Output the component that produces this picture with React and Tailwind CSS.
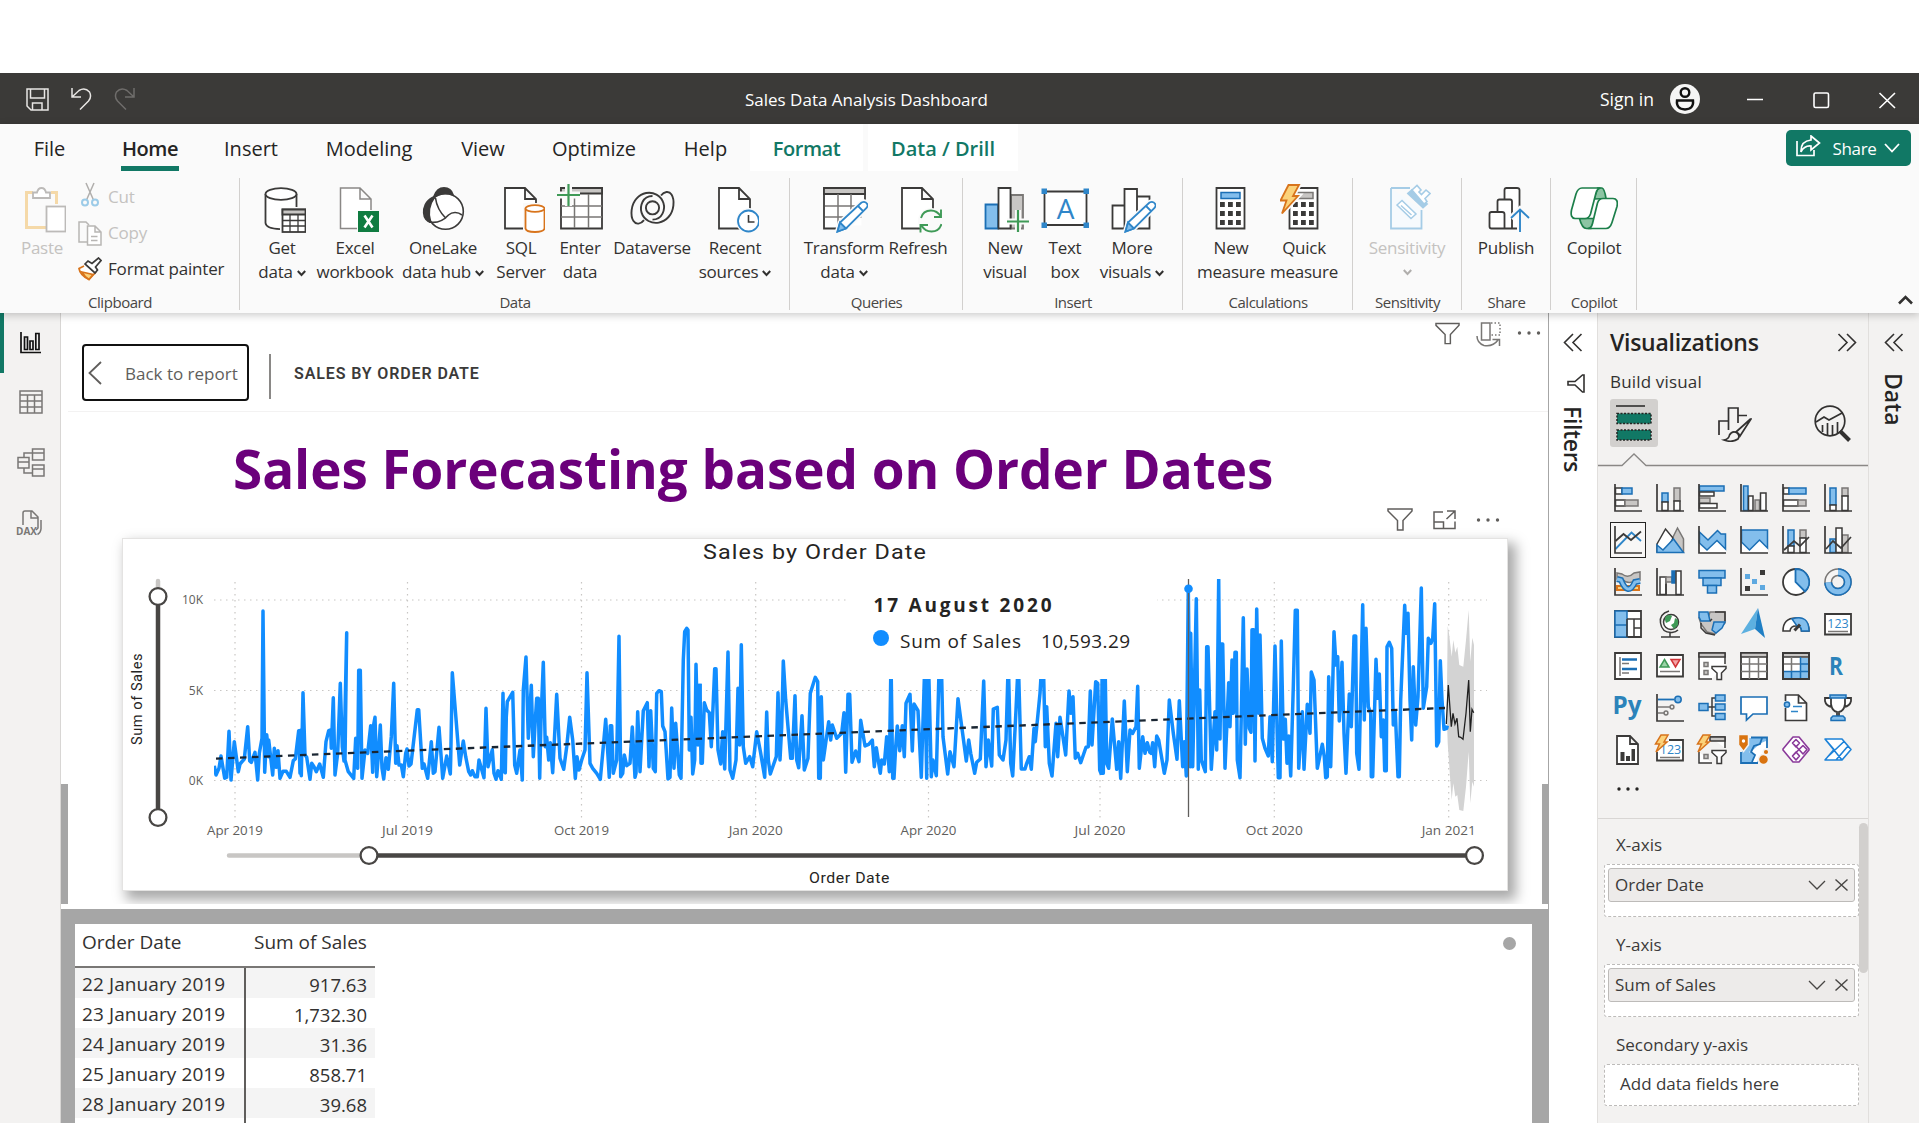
import React from "react";

const INK = "#3b3a39";
const BLUE = "#1b6fb5";
const SKY = "#83beec";
const GRAY = "#797775";
const SILVER = "#c8c6c4";

/* ---------- small shared glyphs ---------- */

const Caret = ({ className = "" }) => (
  <svg width="9" height="7" viewBox="0 0 9 7" fill="none" stroke="currentColor" strokeWidth="2" className={className}>
    <path d="M0.8 1 4.5 5 8.2 1" />
  </svg>
);

const Funnel = ({ w = 26, h = 23 }) => (
  <svg width={w} height={h} viewBox="0 0 26 23" fill="none" stroke="#605e5c" strokeWidth="1.5">
    <path d="M1 1H25V3L16 12.5V22H10.500V12.500L1 3Z" />
  </svg>
);

const Dots = ({ color = "#605e5c", gap = 9.500 }) => (
  <svg width="24" height="6" viewBox="0 0 24 6" fill={color}>
    <circle cx={12 - gap} cy="3" r="1.700" />
    <circle cx="12" cy="3" r="1.700" />
    <circle cx={12 + gap} cy="3" r="1.700" />
  </svg>
);

const DoubleChevron = ({ flip = false }) => (
  <svg width="20" height="19" viewBox="0 0 20 19" fill="none" stroke="#323130" strokeWidth="1.6" className={flip ? "-scale-x-100" : ""}>
    <path d="M10 1 1.500 9.500 10 18M18.500 1 10 9.500 18.500 18" />
  </svg>
);

/* ---------- ribbon icons ---------- */

const R = ({ children }) => (
  <svg width="48" height="49" viewBox="0 0 48 49" fill="none" stroke={INK} strokeWidth="1.8" className="shrink-0">
    {children}
  </svg>
);
const Doc = ({ x = 8, stroke = INK }) => (
  <path stroke={stroke} fill="#fff" d={`M${x} 4H${x + 20}L${x + 31} 15V44.500H${x}ZM${x + 20} 4V15H${x + 31}`} />
);
const Pencil = () => (
  <g stroke="#2f86c9" fill="#fff">
    <path stroke="#fafafa" strokeWidth="5" d="M17.500 47.500 20 38.500 41.500 18.500Q45.500 16.500 47.500 20.500Q48 22 46.500 24L26 44.500Z" />
    <path d="M17.500 47.500 20 38.500 41.500 18.500Q45.500 16.500 47.500 20.500Q48 22 46.500 24L26 44.500ZM38 22 43.500 27.500" />
    <path fill={SKY} d="M17.500 47.500 20 38.500 26 44.500Z" />
  </g>
);
const Keys = () => (
  <g fill={INK} stroke="none">
    {[18, 27, 36].map((y) => [13, 21, 29].map((x) => <rect key={`${x}-${y}`} x={x} y={y} width="4.800" height="5" />))}
  </g>
);

const SWIRL = "M33 11.500C36 7.500 41 6.500 43.500 10.500C47 16 46 27 40.500 33C35 39 27 40.500 20.500 37C13.500 33 11 25 14.500 18C16.500 14 19.500 12 24.500 12";

const icons = {
  paste: (
    <R>
      <path stroke="#f5d9a8" strokeWidth="3" d="M15 8.500H8.500V43.500H28M33 8.500H38.500V20" />
      <path stroke="#bcbab8" fill="#fff" d="M15 14V8.500H19Q20 4 23.500 4T28 8.500H32V14Z" />
      <rect x="28.500" y="22.500" width="19" height="25" stroke="#bcbab8" fill="#fff" />
    </R>
  ),
  getData: (
    <R>
      <path fill="#fff" d="M7.500 9.500V39Q7.500 45 23 45.500V24H38.500V9.500" stroke="none" />
      <path d="M7.500 10V39Q8 44.500 22 45.200M38.500 10V23" />
      <ellipse cx="23" cy="10" rx="15.500" ry="5.800" fill="#fff" />
      <rect x="24.500" y="25.500" width="23" height="22.500" fill="#fff" />
      <path fill={SILVER} d="M24.500 25.500H47.500V30.500H24.500Z" />
      <path strokeWidth="1.300" d="M24.500 36.500H47.500M24.500 42H47.500M32 30.500V48M40 30.500V48" />
    </R>
  ),
  excel: (
    <R>
      <path stroke="#8a8886" fill="#fff" strokeWidth="1.500" d="M26 44.500H9.500V4H29L40 15V26M29 4V15H40" />
      <rect x="27" y="27" width="21" height="21" fill="#107c41" stroke="none" />
      <path stroke="#fff" strokeWidth="2.600" d="M33.500 31.500 41.500 43.500M41.500 31.500 33.500 43.500" />
    </R>
  ),
  oneLake: (
    <R>
      <circle cx="26.500" cy="27.500" r="17.800" fill="#fff" strokeWidth="1.600" />
      <path fill={INK} d="M15 12.500C17 7 20.500 4 25 4C30 4 33 7.500 34 11C28 8.500 20 9 15 12.500Z" />
      <path fill={INK} d="M13.500 13.500C6.500 17 4.500 24 4.800 29C5 34 8 37.500 11.500 38C9 30 9.500 21 16 12.500Z" />
      <path strokeWidth="1.600" d="M16.500 14C17.500 22 21.500 29 27 34.500M10 38C18 39.500 25 36 29.500 31C33.500 27.500 39 28 43 31" />
    </R>
  ),
  sql: (
    <R>
      <Doc x={8} />
      <rect x="26" y="19" width="24" height="30" fill="#fafafa" stroke="none" />
      <path stroke="#d8741c" fill="#fff" d="M28.500 24.500V44.500Q29 48 38 48T47.500 44.500V24.500" />
      <ellipse cx="38" cy="24.500" rx="9.500" ry="3.400" stroke="#d8741c" fill="#fff" />
    </R>
  ),
  enterData: (
    <R>
      <path fill="#fff" d="M5 4H46V44.500H5Z" />
      <path fill={SILVER} d="M5 4H46V9.500H5Z" />
      <path stroke={GRAY} strokeWidth="1.500" d="M5 22H46M5 33H46M18.500 10V44M32.500 10V44" />
      <path stroke="#fafafa" strokeWidth="7" d="M12.500 0V22M0 11H24" />
      <path stroke="#3f9a57" strokeWidth="2.200" d="M12.500 0V22M1 11H24" />
    </R>
  ),
  dataverse: (
    <R>
      <g strokeWidth="1.900">
        <path d={SWIRL} />
        <path transform="rotate(180 24.500 23.800)" d={SWIRL} />
        <circle cx="24.500" cy="23.800" r="6.600" />
      </g>
    </R>
  ),
  recent: (
    <R>
      <Doc x={8} />
      <circle cx="38" cy="37" r="13" fill="#fafafa" stroke="none" />
      <circle cx="37.500" cy="37" r="10.500" stroke="#2f86c9" fill="#fff" />
      <path strokeWidth="1.600" d="M37.500 31V38H43.500" />
    </R>
  ),
  transform: (
    <R>
      <path fill="#fff" d="M4 4H45V44.500H4Z" />
      <path fill={SILVER} d="M4 4H45V10H4Z" />
      <path stroke={GRAY} strokeWidth="1.500" d="M5 22H44M5 33H44M18 10V44M31 10V44" />
      <path stroke="#fafafa" strokeWidth="9" d="M46 26V46H26" />
      <Pencil />
    </R>
  ),
  refresh: (
    <R>
      <Doc x={8} />
      <circle cx="37" cy="37" r="13" fill="#fafafa" stroke="none" />
      <path stroke="#3f9a57" strokeWidth="1.900" d="M27 34Q29 26.500 37 26.500Q43 26.500 47 32.500M47 25.500V33H40M47.500 40Q45 47.500 37.500 47.500Q31 47.500 27.500 41.500M26.500 48.500V41H34" />
    </R>
  ),
  newVisual: (
    <R>
      <path fill={SKY} stroke={BLUE} d="M4.500 20.500H17V44.500H4.500Z" />
      <path fill={SILVER} stroke={GRAY} d="M30 11H42V44.500H30Z" />
      <path fill="#fff" d="M17.500 4H29.500V44.500H17.500Z" />
      <path stroke="#fafafa" strokeWidth="6" d="M37 26V49M26 37.500H48" />
      <path stroke="#3f9a57" strokeWidth="2.200" d="M37 26V48M26 37.500H48" />
    </R>
  ),
  textBox: (
    <R>
      <path fill="#fff" d="M3.500 7.500H45.500V41H3.500Z" />
      <g fill="#2f86c9" stroke="none">
        <rect x="0.500" y="4.500" width="5.500" height="5.500" />
        <rect x="42.500" y="4.500" width="5.500" height="5.500" />
        <rect x="0.500" y="38.500" width="5.500" height="5.500" />
        <rect x="42.500" y="38.500" width="5.500" height="5.500" />
      </g>
      <text x="24.500" y="34.500" textAnchor="middle" fontSize="28" fill="#2f86c9" stroke="none">A</text>
    </R>
  ),
  moreVisuals: (
    <R>
      <path fill="#fff" d="M4.500 21.500H16.500V44.500H4.500ZM29 12.500H41.500V44.500H29ZM16.500 5H29V44.500H16.500Z" />
      <Pencil />
    </R>
  ),
  measure: (
    <R>
      <path fill="#fff" d="M9.500 4H37.500V44.500H9.500Z" />
      <path fill={SKY} stroke={BLUE} strokeWidth="1.500" d="M14 8.500H33V14.500H14Z" />
      <Keys />
    </R>
  ),
  quick: (
    <R>
      <path fill="#fff" d="M9.500 4H37.500V44.500H9.500Z" />
      <path fill={SILVER} stroke={GRAY} strokeWidth="1.500" d="M16 8.500H33V14.500H16Z" />
      <Keys />
      <path stroke="#fafafa" strokeWidth="5" fill="#fafafa" d="M8.500 1H19L13 12H18L2 29.500 6.500 16.500H0.500Z" />
      <path stroke="#d8741c" fill="#fbd27a" d="M8.500 1H19L13 12H18L2 29.500 6.500 16.500H0.500Z" />
    </R>
  ),
  sensitivity: (
    <R>
      <g stroke="#a5cce6">
        <path fill="#f6fafd" d="M8 4H27M38.500 26V44.500H8V4" />
        <path fill="#fff" strokeWidth="1.500" d="M14 21 19 16.500 33 30 28 34.500ZM18 21.500 28.500 31" />
        <path fill="#a5cce6" d="M25 9.500 29 6 44 20 40 23.500Z" />
        <path fill="#fff" strokeWidth="1.600" d="M29 6 34 1.500 38 6 36 8 38.500 10.500 43 6 47 9.500 42 14.500 44 17.500 41 20Z" />
      </g>
    </R>
  ),
  publish: (
    <R>
      <path fill="#fff" strokeLinejoin="round" d="M22.500 15.500V6Q22.500 4 24.500 4H35Q37.500 4 37.500 6V44.500H9.500Q7.500 44.500 7.500 42.500V30Q7.500 28 9.500 28H15.500V17.500Q15.500 15.500 17.500 15.500H28Q30 15.500 30 17.500V44M15.500 28H20Q22.500 28 22.500 30V44" />
      <path stroke="#fafafa" strokeWidth="6" d="M38 27V48M29 34 38 25.500 47 34" />
      <path stroke="#2f86c9" strokeWidth="1.900" d="M38 25.500V48M29 34 38 25.500 47 34" />
    </R>
  ),
  copilot: (
    <R>
      <g stroke="#1c7f4a" strokeWidth="1.700" strokeLinejoin="round">
        <path fill="#8cc5a3" d="M24 15 27.500 4H32Q34.500 4.500 36 14.500Z" />
        <path fill="#8cc5a3" d="M9.500 34.500H25L21 44.500H16.500Q12 44.500 9.500 34.500Z" />
        <path fill="#fff" d="M30 4H12Q8 4 6 10L1.500 26Q0 34 5 34.500H15Q19 34.500 20.500 30L26 9Q27 5 30 4Z" />
        <path fill="#fff" d="M18 44.500H36Q40 44.500 42 38.500L47 22.500Q48.500 14.500 43 14.500H33Q29 14.500 27.500 19L22.500 39.500Q21.500 44 18 44.500Z" />
      </g>
    </R>
  ),
};

/* ---------- ribbon ---------- */

const ribbonGroups = [
  {
    label: "Data", w: "w-[550px] pl-[16px]",
    items: [
      ["getData", "w-[52px]", "Get", "data", true],
      ["excel", "w-[94px]", "Excel", "workbook"],
      ["oneLake", "w-[82px]", "OneLake", "data hub", true],
      ["sql", "w-[74px]", "SQL", "Server"],
      ["enterData", "w-[44px]", "Enter", "data"],
      ["dataverse", "w-[100px]", "Dataverse"],
      ["recent", "w-[66px]", "Recent", "sources", true],
    ],
  },
  {
    label: "Queries", w: "w-[173px] pl-[13px]",
    items: [
      ["transform", "w-[82px]", "Transform", "data", true],
      ["refresh", "w-[66px]", "Refresh"],
    ],
  },
  {
    label: "Insert", w: "w-[220px] pl-[12px]",
    items: [
      ["newVisual", "w-[60px]", "New", "visual"],
      ["textBox", "w-[60px]", "Text", "box"],
      ["moreVisuals", "w-[74px]", "More", "visuals", true],
    ],
  },
  {
    label: "Calculations", w: "w-[170px] pl-[14px]",
    items: [
      ["measure", "w-[68px]", "New", "measure"],
      ["quick", "w-[78px]", "Quick", "measure"],
    ],
  },
  { label: "Sensitivity", w: "w-[109px] pl-[8px]", muted: true, items: [["sensitivity", "w-[92px]", "Sensitivity", "", true]] },
  { label: "Share", w: "w-[89px] pl-[5px]", items: [["publish", "w-[78px]", "Publish"]] },
  { label: "Copilot", w: "w-[86px] pl-[4px]", items: [["copilot", "w-[78px]", "Copilot"]] },
];

const RibbonItem = ({ item, muted }) => {
  const [icon, width, line1, line2, caret] = item;
  return (
    <div className={`flex shrink-0 flex-col items-center pt-[6px] whitespace-nowrap text-[17px] leading-6 tracking-[-0.015em] ${width} ${muted ? "text-[#c4c2c0]" : "text-[#323130]"}`}>
      {icons[icon]}
      <span className="mt-[3px]">{line1}</span>
      <span className={`flex h-6 items-center ${line2 ? "gap-[4px]" : ""}`}>
        {line2}
        {caret && <Caret className={muted ? "text-[#b0aeac]" : "mt-[3px] text-[#323130]"} />}
      </span>
    </div>
  );
};

const GroupShell = ({ width, children }) => (
  <div className={`flex shrink-0 flex-col border-r border-[#d2d0ce] ${width}`}>
    <div className="flex flex-1">{children}</div>
  </div>
);

const GroupLabel = ({ children }) => (
  <span className="absolute inset-x-0 bottom-[-2px] text-center text-[15px] leading-5 tracking-[-0.03em] text-[#484644]">{children}</span>
);

const RibbonGroup = ({ group }) => (
  <div className="relative flex">
    <GroupShell width={group.w}>
      {group.items.map((it) => (
        <RibbonItem key={it[0]} item={it} muted={group.muted} />
      ))}
    </GroupShell>
    <GroupLabel>{group.label}</GroupLabel>
  </div>
);

const Clipboard = () => (
  <div className="relative flex">
    <GroupShell width="w-[240px] pl-[18px]">
      <div className="flex w-[48px] flex-col items-center pt-[6px] text-[17px] leading-6 tracking-[-0.015em] text-[#c4c2c0]">
        {icons.paste}
        <span className="mt-[3px]">Paste</span>
      </div>
      <div className="flex flex-col gap-3 pt-[7px] pl-[12px] text-[17px] leading-6 tracking-[-0.01em]">
        <div className="flex items-center gap-[6px] text-[#c4c2c0]">
          <svg width="24" height="26" viewBox="0 0 24 26" fill="none" strokeWidth="1.500" className="-mt-1">
            <path stroke="#b0aeac" d="M8 1 15.500 18M16 1 8.500 18" />
            <circle cx="7" cy="20.500" r="3" stroke="#9ccbe8" strokeWidth="2" />
            <circle cx="17" cy="20.500" r="3" stroke="#9ccbe8" strokeWidth="2" />
          </svg>
          Cut
        </div>
        <div className="flex items-center gap-[6px] text-[#c4c2c0]">
          <svg width="24" height="25" viewBox="0 0 24 25" fill="none" stroke="#b8b6b4" strokeWidth="1.500" className="-my-1">
            <path d="M9 21H1V1H8L11 4" />
            <path fill="#fff" d="M9.500 5H17L23 11V24H9.500ZM17 5V11H23M13 15.500H19.500M13 19.500H19.500" />
          </svg>
          Copy
        </div>
        <div className="flex items-center gap-[6px] whitespace-nowrap text-[#323130]">
          <svg width="24" height="24" viewBox="0 0 24 24" fill="none" strokeWidth="1.700">
            <path fill="#fff" stroke="#d8741c" d="M6 9 1 11.500Q2 18 11 22.500L18 15" />
            <path fill="#fbd27a" stroke="#d8741c" d="M4 15 15 17.500 11 22.500Q6.500 20 4 15Z" />
            <path fill="#fff" stroke={INK} d="M7 7 10 4 14 6.500 20.500 1 23 3.500 17.500 10 19.500 13 17 16Z" />
          </svg>
          Format painter
        </div>
      </div>
    </GroupShell>
    <GroupLabel>Clipboard</GroupLabel>
  </div>
);

const tabs = [
  ["File", "w-[81px]"],
  ["Home", "w-[120px]", true],
  ["Insert", "w-[82px]"],
  ["Modeling", "w-[154px]"],
  ["View", "w-[74px]"],
  ["Optimize", "w-[148px]"],
  ["Help", "w-[75px]"],
];

const TitleBar = () => (
  <header className="flex h-[51px] shrink-0 items-center bg-[#3b3a38] text-white">
    <div className="flex w-[745px] items-center gap-[22px] pt-px pl-[26px]">
      <svg width="23" height="23" viewBox="0 0 23 23" fill="none" stroke="#e8e6e4" strokeWidth="1.500">
        <path d="M1 1H22V22H5L1 18ZM4.500 1V10H18.500V1M6.500 22V15H16V22" />
      </svg>
      <svg width="21" height="22" viewBox="0 0 21 22" fill="none" stroke="#e8e6e4" strokeWidth="1.500">
        <path d="M1 0V9H10M1 9 8 2.500Q14-1 18.500 4Q21 9 17.500 13L9 21.500" />
      </svg>
      <svg width="21" height="22" viewBox="0 0 21 22" fill="none" stroke="#6f6d6b" strokeWidth="1.500">
        <path d="M20 0V9H11M20 9 13 2.500Q7-1 2.500 4Q0 9 3.500 13L12 21.500" />
      </svg>
    </div>
    <div className="w-[855px] pt-[2px] text-[17px]">Sales Data Analysis Dashboard</div>
    <div className="w-[70px] pt-[2px] text-[17.5px]">Sign in</div>
    <svg width="30" height="30" viewBox="0 0 30 30" fill="none" stroke="#111" strokeWidth="2.400">
      <circle cx="15" cy="15" r="15" fill="#f5f5f5" stroke="none" />
      <circle cx="15" cy="8.500" r="4.300" />
      <path d="M7 16.500H23Q24 25 15 25.500Q6 25 7 16.500Z" />
    </svg>
    <svg width="150" height="20" viewBox="0 0 150 20" fill="none" stroke="#fff" strokeWidth="1.600" className="ml-[47px]">
      <path d="M0 10.500H16M132.500 4 148 19M148 4 132.500 19" />
      <rect x="67" y="4" width="14.500" height="14.500" rx="1.500" />
    </svg>
  </header>
);

const Ribbon = () => (
  <div className="relative z-10 flex h-[189px] shrink-0 flex-col bg-[#fafafa] shadow-[0_2px_8px_rgba(0,0,0,0.22)]">
    <nav className="flex h-[54px] pl-[9px] text-[20px] text-[#252423]">
      {tabs.map(([name, w, active]) => (
        <div key={name} className={`flex h-[47px] flex-col items-center ${w} ${active ? "font-semibold tracking-[-0.02em]" : ""}`}>
          <span className="mt-[11px] leading-[28px]">{name}</span>
          {active && <span className="mt-[3px] h-[5px] w-[58px] bg-[#117865]" />}
        </div>
      ))}
      <div className="ml-[7px] h-[47px] w-[113px] bg-white pt-[11px] text-center leading-[28px] font-semibold tracking-[-0.02em] text-[#117865]">Format</div>
      <div className="ml-[5px] h-[47px] w-[150px] bg-white pt-[11px] text-center leading-[28px] font-semibold text-[#117865]">Data / Drill</div>
      <button className="mt-[6px] mr-[8px] ml-auto flex h-[36px] w-[125px] items-center rounded-[5px] bg-[#117865] pl-[10px] text-[17px] text-white">
        <svg width="25" height="22" viewBox="0 0 25 22" fill="none" stroke="#fff" strokeWidth="1.700" className="-mt-1">
          <path d="M1 6V20.500H18V15" />
          <path d="M15 1 23.500 8 15 15V11Q8 10.500 5 17Q4.500 6 15 5Z" />
        </svg>
        <span className="mt-px ml-[11px] w-[45px] tracking-[-0.02em]">Share</span>
        <svg width="16" height="10" viewBox="0 0 16 10" fill="none" stroke="#fff" strokeWidth="1.800" className="ml-[7px]">
          <path d="M1 1 8 8.500 15 1" />
        </svg>
      </button>
    </nav>
    <div className="flex h-[132px]">
      <Clipboard />
      {ribbonGroups.map((g) => (
        <RibbonGroup key={g.label} group={g} />
      ))}
      <svg width="15" height="10" viewBox="0 0 15 10" fill="none" stroke="#323130" strokeWidth="2.600" className="mt-auto mr-[6px] mb-[5px] ml-auto">
        <path d="M1 8.500 7.500 2 14 8.500" />
      </svg>
    </div>
  </div>
);

/* ---------- left rail ---------- */

const Rail = () => (
  <aside className="relative flex w-[61px] shrink-0 flex-col items-center border-r border-[#d8d6d4] bg-[#f3f2f1]">
    <span className="absolute top-0 left-0 h-[60px] w-[4px] bg-[#117865]" />
    <svg width="21" height="22" viewBox="0 0 21 22" fill="none" stroke="#111" strokeWidth="1.700" className="mt-[19px]">
      <path d="M1 0V20.500H21M4.500 17.500V5H7.500V17.500ZM10 17.500V9H13V17.500ZM15.800 17.500V1.500H19V17.500Z" />
    </svg>
    <svg width="24" height="24" viewBox="0 0 24 24" fill="none" stroke="#797775" strokeWidth="1.500" className="mt-[36px] ml-[2px]">
      <path d="M1 1H23V23H1ZM1 5H23M1 11H23M1 17H23M8.500 5V23M15.500 5V23" />
    </svg>
    <svg width="28" height="29" viewBox="0 0 28 29" fill="none" stroke="#797775" strokeWidth="1.500" className="mt-[34px] ml-[2px]">
      <path d="M15.500 1H27V12H15.500ZM15.500 5H27M1 9.500H12V20H1ZM1 14H12M15.500 17H27V28H15.500ZM15.500 21H27M7 9.500V5H15.500M7 20V25H15.500" />
    </svg>
    <svg width="30" height="30" viewBox="0 0 30 30" fill="none" stroke="#797775" strokeWidth="1.500" className="mt-[33px]">
      <path d="M8 15V3Q8 1 10 1H17L23 7V18L21 20M16 1V8H23M26 10V19Q25.500 23 22.500 24.500" />
      <text x="1" y="25" fontSize="10" fontWeight="700" fill="#797775" stroke="none">DAX</text>
    </svg>
  </aside>
);

/* ---------- sales chart ---------- */

const shift = (raw, ox, oy) =>
  raw
    .trim()
    .split(/\s+/)
    .map((p) => {
      const [x, y] = p.split(",").map(Number);
      return `${(ox + x / 3).toFixed(1)},${(oy + y / 3).toFixed(1)}`;
    })
    .join(" ");

const sales2019 = shift(
  "43,617 48,645 57,625 63,588 74,655 80,652 87,514 93,660 103,545 115,635 120,612 133,597 143,500 149,603 154,607 165,577 173,660 178,580 186,535 189,153 194,637 200,524 207,590 206,540 218,645 223,565 229,622 234,572 240,655 249,634 259,634 270,652 280,602 286,597 296,512 300,640 303,510 304,647 309,398 315,585 320,592 330,658 335,610 342,620 349,635 359,612 370,652 378,545 386,512 392,510 394,565 400,413 405,645 413,580 421,370 427,560 432,603 440,218 435,600 445,635 461,655 467,535 473,625 476,331 481,331 486,655 495,570 503,580 512,497 518,637 520,500 525,472 530,650 534,600 541,495 546,625 551,657 558,593 565,628 574,530 581,370 587,610 591,557 597,615 604,615 610,650 617,580 621,567 627,618 633,612 652,449 656,449 667,625 672,612 683,655 694,545 700,640 705,635 717,502 728,655 740,588 751,642 752,600 757,338 779,615 790,543 797,590 806,635 812,645 817,632 825,650 832,650 837,600 852,653 858,445 864,620 877,569 882,640 888,658 894,632 904,658 909,400 913,635 916,638 919,470 922,425 938,397 944,615 950,640 960,570 967,660 970,390 978,291 985,535 994,376 1000,590 1006,480 1010,415 1015,415 1019,655 1023,480 1030,307 1036,560 1040,532 1046,600 1051,548 1058,638 1070,403 1080,595 1091,628 1100,560 1109,472 1118,540 1126,655 1131,590 1137,630 1145,600 1155,570 1161,338 1170,610 1178,625 1190,640 1201,658 1210,560 1217,478 1228,652 1231,497 1235,497 1240,640 1250,600 1257,229 1262,650 1268,640 1273,585 1280,617 1290,610 1297,501 1305,652 1308,640 1313,455 1320,635 1330,452 1342,428 1347,620 1352,452 1360,625 1366,635 1370,400 1377,392 1384,395 1388,498 1395,515 1404,657 1410,652 1415,444 1422,625 1427,490 1438,645 1443,655 1450,300 1454,215 1460,205 1464,210 1468,570 1473,472 1478,642 1484,600 1488,313 1494,555 1500,371",
  200, 560
);
const salesEarly2020 = shift(
  "0,371 3,610 7,610 13,428 20,450 28,458 34,560 44,326 48,326 54,570 62,612 68,515 74,627 84,276 90,630 98,655 108,600 114,385 119,555 124,254 130,560 137,610 149,590 158,620 170,515 182,580 194,652 200,456 205,600 211,642 222,610 229,590 234,398 240,600 245,500 250,303 257,420 272,595 277,595 285,407 290,600 296,623 306,467 313,630 324,595 331,400 346,352 353,365 356,655 361,655 364,410 370,600 386,485 392,540 397,495 410,535 425,520 432,458 437,637 444,403 449,403 456,607 467,573 477,605 482,481 495,558 506,553 517,540 523,620 529,563 541,640 545,600 553,612 560,530 568,635 573,300 578,655 582,655 587,560 592,498 599,572 607,497 613,590 618,430 630,403 637,573 642,432 654,452 664,652 674,320 680,655 681,300 686,330 694,650 699,600 709,647 718,300 724,300 729,530 743,642 750,575 762,620 774,416 799,603 806,540 812,580 824,640 830,607 841,597 851,363 858,620 865,540 875,618 880,447 892,442 898,585 909,600 918,540 925,300 932,610 938,648 948,450 955,300 964,627 975,627 980,610 988,590 994,628 1002,505 1006,545 1020,400 1026,300 1030,300 1036,560 1040,440 1048,610 1056,648 1068,490 1073,590 1080,472 1097,585 1107,393 1113,460 1119,410 1126,595 1133,580 1142,608 1158,562 1165,560 1171,393 1176,555 1187,365 1193,370 1199,630 1203,640 1207,300 1210,640 1215,300 1220,610 1226,625 1237,477 1250,628 1256,545 1262,655 1273,423 1282,635 1290,510 1298,520 1308,500 1313,379 1318,625 1328,530 1335,580 1342,548 1350,578",
  700, 560
);
const salesLate2020 = shift(
  "58,755 63,760 68,728 74,800 80,708 86,720 103,820 111,780 118,600 130,700 141,778 148,602 158,800 163,725 169,828 175,266 181,800 182,400 188,800 199,296 205,808 209,570 214,780 226,815 230,440 234,440 244,808 255,635 260,750 266,238 270,717 274,432 278,432 285,805 296,548 300,680 306,480 310,640 315,457 319,457 322,780 330,833 340,353 346,733 351,507 358,685 363,697 366,389 371,389 375,783 380,327 386,640 390,405 397,715 405,745 415,768 420,650 427,785 435,438 445,833 450,833 454,423 460,717 466,658 471,790 476,708 482,828 490,560 496,331 502,331 506,805 517,635 522,808 532,613 540,700 544,516 552,540 562,805 577,733 583,770 587,833 592,830 596,530 602,800 612,395 618,495 623,470 628,663 636,487 642,700 648,820 658,582 664,680 672,408 677,408 680,760 687,808 698,314 703,660 708,385 715,620 722,640 724,830 728,830 738,478 743,595 748,522 754,710 760,660 764,812 769,812 771,440 778,427 785,445 790,675 796,635 804,830 808,830 812,600 824,316 828,400 834,340 840,600 845,720 850,500 857,675 864,590 874,264 880,625 890,560 895,415 903,430 908,415 914,311 920,738 926,725 931,482 936,600 942,688 950,685 952,677",
  1130, 500
);
const forecastBand = shift(
  "950,640 953,378 957,400 965,470 970,420 976,458 982,440 988,495 1000,500 1008,420 1016,330 1021,485 1027,413 1032,435 1032,860 1027,845 1021,910 1016,755 1008,860 1000,933 988,930 982,885 976,890 970,850 965,900 960,830 953,730",
  1130, 500
);
const forecastLine = shift(
  "949,672 955,555 964,680 969,640 975,672 981,655 986,710 992,712 999,718 1008,640 1016,540 1021,695 1026,628 1031,638",
  1130, 500
);

const months = [
  [235, "Apr 2019", 56], [407.500, "Jul 2019", 51], [581.500, "Oct 2019", 55], [755.700, "Jan 2020", 54],
  [928.500, "Apr 2020", 56], [1100, "Jul 2020", 51], [1274.300, "Oct 2020", 57], [1448.700, "Jan 2021", 54],
];

const SalesChart = () => (
  <svg width="1386" height="353" viewBox="122 538 1386 353" className="block font-['Roboto','Open_Sans',sans-serif]">
    <defs>
      <clipPath id="plot">
        <path d="M214 579H1500V820H214Z" />
      </clipPath>
    </defs>
    <text x="703" y="559" fontSize="21" fill="#252423" letterSpacing="1" textLength="224" lengthAdjust="spacingAndGlyphs">Sales by Order Date</text>

    <g stroke="#c8c6c4" strokeWidth="1.200" strokeDasharray="1.500 4.500">
      {[600, 690.500, 780.500].map((y) => (
        <path key={y} d={`M214 ${y}H1487`} />
      ))}
      {months.map(([x]) => (
        <path key={x} d={`M${x} 582V818`} />
      ))}
    </g>

    <g clipPath="url(#plot)">
      <polygon points={forecastBand} fill="#d3d3d3" />
      <polyline points={forecastLine} fill="none" stroke="#1f1f1f" strokeWidth="1.300" />
      <g fill="none" stroke="#118dff" strokeWidth="3.500" strokeLinejoin="round">
        <polyline points={sales2019} />
        <polyline points={salesEarly2020} />
        <polyline points={salesLate2020} />
      </g>
      <path d="M216 758.600 1445 708" stroke="#1a2633" strokeWidth="2.300" strokeDasharray="6.500 5.500" />
      <path d="M1188.500 579V817" stroke="#605e5c" strokeWidth="1.300" />
      <circle cx="1188.500" cy="588.700" r="4.300" fill="#118dff" />
    </g>

    <rect x="847" y="574" width="310" height="105" fill="#fff" />
    <g className="font-['Open_Sans',sans-serif]" fill="#252423">
      <text x="873.500" y="612" fontSize="19" fontWeight="700" textLength="178">17 August 2020</text>
      <circle cx="881" cy="638" r="8" fill="#118dff" />
      <text x="900" y="647.500" fontSize="19" textLength="121">Sum of Sales</text>
      <text x="1041" y="647.500" fontSize="19" textLength="89">10,593.29</text>
    </g>

    <g fill="#605e5c" className="font-['Open_Sans',sans-serif]">
      <g textAnchor="end" fontSize="12">
        <text x="203" y="604">10K</text>
        <text x="203" y="695">5K</text>
        <text x="203" y="784.500">0K</text>
      </g>
      {months.map(([x, label, len]) => (
        <text key={x} x={x} y="835" fontSize="13.500" textAnchor="middle" textLength={len} lengthAdjust="spacingAndGlyphs">{label}</text>
      ))}
    </g>
    <text x="809" y="882.500" fontSize="14" fill="#252423" letterSpacing="0.500" textLength="81" lengthAdjust="spacingAndGlyphs">Order Date</text>
    <text transform="translate(142 745) rotate(-90)" fontSize="14" fill="#252423" letterSpacing="0.500" textLength="92" lengthAdjust="spacingAndGlyphs">Sum of Sales</text>

    <g fill="none" strokeWidth="4.500" strokeLinecap="round">
      <path d="M158 581V590M229 855.500H362" stroke="#c8c6c4" />
      <path d="M158 604V808M378 855.500H1466" stroke="#484644" />
      <g fill="#fff" stroke="#484644" strokeWidth="2.300">
        <circle cx="158" cy="596.500" r="8.400" />
        <circle cx="158" cy="817.500" r="8.400" />
        <circle cx="369" cy="855.500" r="8.400" />
        <circle cx="1474.500" cy="855.500" r="8.400" />
      </g>
    </g>
  </svg>
);

/* ---------- report canvas ---------- */

const rows = [
  ["22 January 2019", "917.63"],
  ["23 January 2019", "1,732.30"],
  ["24 January 2019", "31.36"],
  ["25 January 2019", "858.71"],
  ["28 January 2019", "39.68"],
];

const Canvas = () => (
  <main className="flex w-[1488px] shrink-0 flex-col border-r border-[#a6a6a6] bg-white">
    <section className="relative h-[591px] shrink-0 overflow-hidden">
      <div className="ml-[7px] flex h-[99px] items-start border-b border-[#f3f2f2]">
        <button className="mt-[31px] ml-[14px] flex h-[57px] w-[167px] items-center rounded-[4px] border-[2.5px] border-[#111] pl-[4px] text-[17px] text-[#605e5c]">
          <svg width="14" height="24" viewBox="0 0 14 24" fill="none" stroke="#605e5c" strokeWidth="1.800">
            <path d="M13 1 1.500 12 13 23" />
          </svg>
          <span className="mt-[2px] ml-[23px] whitespace-nowrap">Back to report</span>
        </button>
        <span className="mt-[41px] ml-[20px] h-[45px] w-[2px] bg-[#8a8886]" />
        <span className="mt-[49px] ml-[23px] font-['Roboto','Open_Sans',sans-serif] text-[16px] leading-[24px] font-semibold tracking-[0.055em] whitespace-nowrap text-[#3b3a39]">SALES BY ORDER DATE</span>
        <div className="mt-[9px] mr-[7px] ml-auto flex items-start gap-[16px]">
          <Funnel w={25} h={23} />
          <svg width="25" height="25" viewBox="0 0 25 25" fill="none" stroke="#797775" strokeWidth="1.500">
            <path d="M5.500 1H14V18H5.500Z" />
            <path strokeDasharray="1.500 2" d="M15 1H24V13H15" />
            <path d="M1 14Q1 21 8 23.500Q17 25 22 18M16.500 17.500H23.500V24" />
          </svg>
          <span className="flex h-[22px] items-center"><Dots /></span>
        </div>
      </div>
      <h1 className="mt-[21px] ml-[172px] text-[53px] leading-[72px] font-bold tracking-[-0.001em] whitespace-nowrap text-[#6b007b]">Sales Forecasting based on Order Dates</h1>
      <div className="mt-[3px] mr-[48px] flex items-center justify-end gap-[20px]">
        <Funnel />
        <svg width="23" height="20" viewBox="0 0 23 20" fill="none" stroke="#605e5c" strokeWidth="1.500">
          <path d="M10 2H1V18.500H22V11.500M1 12H10.500V18.500M14 1H22V9M22 1 13.500 9" />
        </svg>
        <Dots />
      </div>
      <div className="mt-[7px] ml-[61px] h-[353px] w-[1386px] border border-[#e4e3e2] bg-white shadow-[6px_7px_12px_2px_rgba(0,0,0,0.34)]">
        <div className="-m-px"><SalesChart /></div>
      </div>
      <span className="absolute bottom-0 left-0 h-[120px] w-[7px] bg-[#a6a6a6]" />
      <span className="absolute right-0 bottom-0 h-[120px] w-[6px] bg-[#a6a6a6]" />
    </section>
    <section className="mt-[5px] flex min-h-0 flex-1 bg-[#a6a6a6] pt-[15px] pr-[16px] pl-[14px]">
      <div className="flex flex-1 items-start justify-between overflow-hidden bg-white">
        <div className="w-[300px] text-[19px] text-[#323130]">
          <div className="flex h-[44px] border-b-2 border-[#797775] pr-2 pl-[7px] pt-[6px] leading-[24px]">
            <span className="w-[172px]">Order Date</span>
            <span className="whitespace-nowrap">Sum of Sales</span>
          </div>
          {rows.map(([date, value], i) => (
            <div key={date} className={`flex h-[30px] items-start leading-[33px] ${i % 2 ? "bg-white" : "bg-[#f4f4f4]"}`}>
              <span className="h-full w-[171px] border-r-2 border-[#605e5c] pl-[7px] tracking-[0.005em] whitespace-nowrap">{date}</span>
              <span className="flex-1 pr-2 text-right text-[18.5px]">{value}</span>
            </div>
          ))}
          <div className="h-2 w-[171px] border-r-2 border-[#605e5c]" />
        </div>
        <span className="mt-[13px] mr-[16px] size-[13px] rounded-full bg-[#a6a6a6]" />
      </div>
    </section>
  </main>
);

/* ---------- visual gallery ---------- */

const V = ({ children }) => (
  <svg width="28" height="28" viewBox="0 0 28 28" fill="none" stroke={INK} strokeWidth="1.500" overflow="visible">
    {children}
  </svg>
);
const Axes = () => <path strokeWidth="1.700" d="M1 0V27H28" />;
const B = (p) => <path fill={SKY} stroke={BLUE} {...p} />;
const G = (p) => <path fill={SILVER} stroke={GRAY} {...p} />;
const W = (p) => <path fill="#fff" stroke={INK} {...p} />;
const Bolt = () => <path stroke="#d8741c" fill="#fbd27a" d="M5-1H12L8 6H11L0 16 3.500 8H-0.500Z" />;
const SlicerFunnel = () => <path fill="#fff" d="M14 14.500H28V16.500L23.500 21V27.500H19V21L14 16.500Z" />;

const gallery = [
  <V><W d="M1.500 4H8V10H1.500Z" /><B d="M8 4H18V10H8Z" /><W d="M1.500 16H11V22H1.500Z" /><G d="M11 16H24V22H11Z" /><Axes /></V>,
  <V><B d="M6 9H12V18H6Z" /><W d="M6 18H12V26.500H6Z" /><G d="M18 4H24V17H18Z" /><W d="M18 17H24V26.500H18Z" /><Axes /></V>,
  <V><B d="M1.500 2H26V7H1.500Z" /><W d="M1.500 8H16V12H1.500Z" /><G d="M1.500 14H12V19H1.500Z" /><W d="M1.500 19.500H19V24H1.500Z" /><Axes /></V>,
  <V><B d="M3.500 2H8V26.500H3.500Z" /><W d="M8.500 12H13V26.500H8.500Z" /><G d="M15 16H19.500V26.500H15Z" /><W d="M20.500 9H26V26.500H20.500Z" /><Axes /></V>,
  <V><W d="M1.500 4H7V10H1.500Z" /><B d="M7 4H24V10H7Z" /><W d="M1.500 16H16V22H1.500Z" /><G d="M16 16H24V22H16Z" /><Axes /></V>,
  <V><B d="M6 4H12V21H6Z" /><W d="M6 21H12V26.500H6Z" /><G d="M18 4H24V12H18Z" /><W d="M18 12H24V26.500H18Z" /><Axes /></V>,

  <V><path stroke="#2f86c9" strokeWidth="1.800" d="M1.500 23 17.500 6.500 27 15" /><path strokeWidth="1.800" d="M1.500 15 9.500 8 17 14 27 5.500" /><Axes /></V>,
  <V><G d="M14 17 21.500 2 27.500 13V26H17Z" /><W d="M1 18 9.500 3 17 12 10 26H1Z" /><B d="M1 19 7 24 17.500 13 27.500 26.500H1Z" /></V>,
  <V><path fill="#fff" stroke="none" d="M2 20 9 24 18 14 28 23V26H2Z" /><B d="M1.500 6 10 14 19.500 4.500 23 8H27.500V23L19 14.500 9 24 1.500 17Z" /><Axes /></V>,
  <V><path fill="#fff" stroke="none" d="M2 18 9 24 19 14 28 23V26H2Z" /><B d="M1.500 4H27.500V22L19.500 14 9.500 24 1.500 16Z" /><Axes /></V>,
  <V><B d="M6 4H12V20H6Z" /><G d="M18 4H24V12H18Z" /><W d="M6 20H12V26.500H6ZM18 12H24V26.500H18Z" /><path strokeWidth="1.700" d="M2 24 12 15 18 20 27 11" /><Axes /></V>,
  <V><B d="M6 13H12V26.500H6Z" /><G d="M18 9H24V26.500H18Z" /><W d="M12 2H18V26.500H12Z" /><path strokeWidth="1.700" d="M2 23 9 15 17 22 27 11" /><Axes /></V>,

  <V><path stroke="#d8741c" fill="#fbd27a" strokeWidth="2" d="M3 18H25V22H3Z" /><G d="M3 5 8 6Q14 11 20 5L26 4V12L20 13Q14 17 8 11L3 11Z" /><path stroke={BLUE} strokeWidth="6" d="M3 11 7 12Q14 29 21 14L26 13" /><path stroke={SKY} strokeWidth="3" d="M3 11 7 12Q14 29 21 14L26 13" /><Axes /></V>,
  <V><W d="M4 9H10V26.500H4Z" /><G d="M10 9H16V14H10Z" /><path fill={BLUE} stroke={BLUE} d="M16 3H19V15H16Z" /><W d="M20 3H25V26.500H20ZM10 16V26.500" /><Axes /></V>,
  <V><B d="M1 2.500H27V10H1Z" /><B d="M5 10H23V17.500H5Z" /><B d="M9.500 17.500H18.500V25H9.500Z" /></V>,
  <V><g stroke="none"><path fill={INK} d="M20 2H25V7H20ZM5 18H10V23H5Z" /><path fill="#5ea9e0" d="M5 6H10V11H5ZM12 11H17V16H12ZM20 17H25V22H20Z" /></g><Axes /></V>,
  <V><circle cx="14" cy="14" r="13" fill="#fff" strokeWidth="1.800" /><B strokeWidth="1.800" d="M13.500 1A13 13 0 0 1 23 23.500L13.500 14Z" /></V>,
  <V><circle cx="14" cy="14" r="9.800" stroke={GRAY} strokeWidth="8" /><circle cx="14" cy="14" r="9.800" stroke="#f6f5f4" strokeWidth="5" /><path stroke={BLUE} strokeWidth="8" d="M14 4.200A9.800 9.800 0 1 1 4.200 14.500" /><path stroke={SKY} strokeWidth="5" d="M14 4.200A9.800 9.800 0 1 1 4.200 14.500" /></V>,

  <V><W strokeWidth="1.800" d="M1 1H27V27H1Z" /><B d="M1 1H13V27H1ZM1 15H13" /><path d="M13 9H27M20 9V27M20 18H27M13 9V27" /></V>,
  <V><circle cx="15" cy="12" r="7.500" fill="#fff" /><path fill="#3f9a57" stroke="none" d="M10 6Q14 4 16 6L14 11 10 13Q8 9 10 6ZM19 8 22 10V15L18 19 15 15 18 13Z" /><path d="M13 1Q3 4 4.500 13Q6 23 16 22.500Q20 22 22 20M14 23V27M5 27H24" /></V>,
  <V><G d="M12 2H27V13L20 20 17 24 9 22 3 14 1 8H10Z" /><B d="M1 2H10L12 11H3L1 7Z" /><B d="M16 12H27L24 18 18 23 14 20Z" /><path d="M12 11 14 9M17 2H27V11M3 13V18L8 23 17 25" /></V>,
  <V><path fill="#5cb0e0" stroke="none" d="M18-2 1 24 15 19Z" /><path fill="#1f7fc4" stroke="none" d="M18-2 25 28 15 19Z" /></V>,
  <V><path strokeWidth="1.600" fill="#fff" d="M1 21Q1 8 14 8Q27 8 27 21H19.500Q19.500 16 14 16T8 21Z" /><B d="M10 9Q27 4 27 21H19.500Q19.500 16 15 16L10 9Z" /><path strokeWidth="3" d="M12.500 20.500 18 14.500" /></V>,
  <V><W strokeWidth="1.800" d="M1 4H27V24.500H1Z" /><text x="14" y="18" fontSize="12.500" fill="#2f86c9" stroke="none" textAnchor="middle">123</text><path stroke={GRAY} d="M4 21.500H24" /></V>,

  <V><W strokeWidth="1.800" d="M1 1H27V27H1Z" /><path stroke={GRAY} d="M6 5V24M8 11.500H15M8 21H15" /><path stroke={BLUE} strokeWidth="2.400" d="M8 7.500H23M8 17H23" /></V>,
  <V><W strokeWidth="1.800" d="M1 3H27V24.500H1Z" /><path stroke="#3f9a57" fill="#9bd3a8" d="M8.500 7.500 13 15H4Z" /><path stroke="#d13438" fill="#f4a3a5" d="M15 7.500H24L19.500 15Z" /><path stroke={GRAY} d="M4 19.500H24" /></V>,
  <V><path fill="#fff" d="M14 27H1V1H27V12" /><G stroke={INK} d="M1 1H27V5H1Z" /><G d="M6 10.500H10V14.500H6ZM6 18.500H10V22.500H6Z" /><SlicerFunnel /></V>,
  <V><W strokeWidth="1.800" d="M1 1H27V27H1Z" /><G stroke={INK} d="M1 1H27V5H1Z" /><path stroke={GRAY} d="M1 12H27M1 19.500H27M9.500 5V27M18.500 5V27" /></V>,
  <V><W strokeWidth="1.800" d="M1 1H27V27H1Z" /><G stroke={INK} d="M1 1H27V5H1Z" /><B stroke="none" d="M18 6H26V26H2V19H18Z" /><path stroke={BLUE} d="M1 19.500H27M18.500 5V27M9.500 19.500V27M18.500 12H27" /><path stroke={GRAY} d="M1 12H18M9.500 5V19" /><path strokeWidth="1.800" d="M1 1H27V27H1Z" /></V>,
  <V><text x="5" y="22.500" fontSize="25" fontWeight="700" fill="#2b83ba" stroke="none" textLength="14" lengthAdjust="spacingAndGlyphs">R</text></V>,

  <V><text x="-1.500" y="19.500" fontSize="25" fontWeight="700" fill="#2b83ba" stroke="none" textLength="29" lengthAdjust="spacingAndGlyphs">Py</text></V>,
  <V><path stroke={BLUE} strokeWidth="1.800" d="M2 5.500H18" /><circle cx="22" cy="5.500" r="3.200" fill={SKY} stroke={BLUE} /><path stroke={GRAY} d="M2 13H14M2 19H8" /><circle cx="16" cy="13" r="1.900" stroke={GRAY} /><circle cx="10" cy="19" r="1.900" stroke={GRAY} /><Axes /></V>,
  <V><path d="M10 13H14M17 4H14V22H17M14 13H17" /><B d="M1 9.500H10V16.500H1Z" /><B d="M17.500 1H27V7H17.500Z" /><B d="M17.500 10H27V16H17.500Z" /><B d="M17.500 19.500H27V25.500H17.500Z" /></V>,
  <V><path fill="#fff" stroke={BLUE} strokeWidth="1.700" d="M1 3H27V20H13L6.500 26V20H1Z" /></V>,
  <V><path fill="#fff" stroke="none" d="M3.500 1H16.500L24.500 9V26.500H3.500Z" /><path strokeWidth="1.700" d="M3.500 14V26.500H24.500V9L16.500 1H3.500V7M16.500 1V9H24.500" /><circle cx="5" cy="10.500" r="2.600" fill={SKY} stroke={BLUE} /><path stroke="#2f86c9" d="M11 12.500H20M9 17.500H16" /></V>,
  <V><path fill="#fff" strokeWidth="1.800" d="M7 3V10Q8 17 13 18V22H15V18Q20 17 21 10V3M7 4H1V7Q2 12 8 13M21 4H27V7Q26 12 20 13" /><B d="M6 1H22V4H6Z" /><B d="M7 26.500V24L9 22H19L21 24V26.500Z" /></V>,

  <V><W strokeWidth="1.800" d="M3 0H16L24 8V28H3ZM16 0V8H24" /><path fill={INK} stroke="none" d="M6.500 16H10.500V25H6.500ZM12 20H16V25H12ZM17.500 13H21V25H17.500Z" /></V>,
  <V><W strokeWidth="1.800" d="M13 4H27V24.500H1V16" /><text x="14.500" y="18" fontSize="12.500" fill="#2f86c9" stroke="none" textAnchor="middle">123</text><path stroke={GRAY} d="M4 21.500H24" /><Bolt /></V>,
  <V><path fill="#fff" d="M14 27H1V16M12 1H27V12" /><G stroke={INK} d="M12 1H27V5H12Z" /><G d="M6 18.500H10V22.500H6Z" /><SlicerFunnel /><Bolt /></V>,
  <V><path fill={SKY} stroke="none" d="M2 2H26V26H2Z" /><path fill="#fff" stroke="none" d="M21 7 26 5V18L20 20 17 26H12L14 19 9 16 14 13Z" /><path stroke={BLUE} strokeWidth="1.800" d="M11 1.500H27V12M18 27H1V16M22 2 20 8 14 10 11 16 15 19 12 26" /><path stroke="#f3f2f1" fill="#d9730f" d="M-1.500-1.500H8.500V9L3.500 15.500-1.500 9Z" /><circle cx="3.500" cy="5" r="1.700" fill="#fff" stroke="none" /><circle cx="23.500" cy="23.500" r="5" fill="#d9730f" stroke="#f3f2f1" /><circle cx="26" cy="16" r="2.800" fill="#d9730f" stroke="#f3f2f1" /></V>,
  <V><path fill="#fff" stroke="#8a3a9a" strokeWidth="1.600" strokeLinejoin="round" d="M11 1H17L27 13V14L17 26H11L1 14V13ZM10.500 7 14 3.500 17.500 7 14 11ZM17 13.500 21 9.500 25 13.500 21 18ZM10.500 20 14 16 17.500 20 14 24ZM10.500 7 17 13.500 10.500 20" /></V>,
  <V><path fill="#fff" stroke="#1d82d8" strokeWidth="1.600" strokeLinejoin="round" d="M1 3H18L27 13.500 18 24H1L10 13.500ZM1 3 18 24M3 21.500 20 5.500M12 24 24 10" /></V>,
];

const FieldWell = ({ title, field }) => (
  <div className="h-[100px]">
    <div className="pt-[14px] pl-[13px] text-[17px] leading-[24px] text-[#3b3a39]">{title}</div>
    {field ? (
      <div className="mt-[7px] ml-px h-[53px] w-[255px] rounded-[3px] border border-dashed border-[#bdbbb9] bg-white p-[3px]">
        <div className="flex h-[34px] items-center rounded-[3px] border border-[#bdbbb9] bg-[#edebea] pr-[6px] pl-[6px] text-[17px] text-[#3b3a39]">
          <span className="flex-1">{field}</span>
          <svg width="18" height="10" viewBox="0 0 18 10" fill="none" stroke="#484644" strokeWidth="1.300">
            <path d="M1 1 9 9 17 1" />
          </svg>
          <svg width="13" height="12" viewBox="0 0 13 12" fill="none" stroke="#484644" strokeWidth="1.400" className="ml-[9px]">
            <path d="M0.500 0.500 12.500 11.500M12.500 0.500 0.500 11.500" />
          </svg>
        </div>
      </div>
    ) : (
      <div className="mt-[7px] ml-px flex h-[42px] w-[255px] items-center rounded-[3px] border border-dashed border-[#bdbbb9] bg-white pb-[2px] pl-[15px] text-[17px] text-[#3b3a39]">Add data fields here</div>
    )}
  </div>
);

const Visualizations = () => (
  <aside className="flex w-[272px] shrink-0 flex-col border-x border-[#e1dfdd] bg-[#f3f2f1]">
    <div className="mt-[14px] flex items-center justify-between pr-[11px] pl-[12px]">
      <h2 className="text-[23px] leading-[30px] font-semibold tracking-[-0.012em] text-[#252423]">Visualizations</h2>
      <DoubleChevron flip />
    </div>
    <div className="mt-[13px] pl-[12px] text-[17px] leading-[24px] font-medium tracking-[0.01em] text-[#323130]">Build visual</div>
    <div className="mt-[5px] flex pl-[12px]">
      <div className="flex size-[48px] items-center justify-center rounded-[3px] bg-[#d2d0ce]">
        <svg width="36" height="36" viewBox="0 0 36 36" fill="#117865" stroke="#252423" strokeWidth="1.500">
          <path d="M0 1H29" />
          <rect x="1" y="8.500" width="34" height="10" strokeDasharray="2 1.500" />
          <rect x="1" y="25" width="34" height="10" strokeDasharray="2 1.500" />
        </svg>
      </div>
      <svg width="34" height="36" viewBox="0 0 34 36" fill="none" stroke="#323130" strokeWidth="1.700" className="mt-[7px] ml-[60px]">
        <path d="M1 29V15H10.500M10.500 24V2H20V17M20 9.500H29" />
        <path fill="#f3f2f1" d="M32.500 13 18 26Q21 27 22 30L33 13Z" />
        <path fill="#f3f2f1" d="M6 34Q11 33 11.500 29Q14 24.500 18.500 26.500Q22.500 29 20 33Q14 37 6 34Z" />
      </svg>
      <svg width="37" height="37" viewBox="0 0 37 37" fill="none" stroke="#323130" strokeWidth="1.700" className="mt-[6px] ml-[62px]">
        <circle cx="16" cy="16" r="14.800" />
        <path d="M2 17 10 12 15 15 29 7.500M8.500 20V27M13.500 18V30M18.500 20V30M23.500 17V28" />
        <path strokeWidth="4" d="M26 26 35.500 35.500" />
      </svg>
    </div>
    <svg width="270" height="14" viewBox="0 0 270 14" fill="none" stroke="#8a8886" strokeWidth="1.300" className="mt-[6px] shrink-0">
      <path d="M0 12.500H24L36 1 48 12.500H270" />
    </svg>
    <div className="mt-[13px] ml-[12px] grid w-[252px] grid-cols-6">
      {gallery.map((icon, i) => (
        <div key={i} className="flex size-[42px] items-start">
          <div className={`flex size-[36px] items-center justify-center ${i === 6 ? "border border-[#252423] bg-white/40" : ""}`}>{icon}</div>
        </div>
      ))}
    </div>
    <div className="mt-[12px] flex h-[33px] items-start border-b border-[#d8d6d4] pl-[18px]">
      <Dots color="#252423" gap={9} />
    </div>
    <div className="relative pl-[5px]">
      <FieldWell title="X-axis" field="Order Date" />
      <FieldWell title="Y-axis" field="Sum of Sales" />
      <FieldWell title="Secondary y-axis" />
      <span className="absolute top-[4px] right-0 h-[150px] w-[9px] rounded-full bg-[#d2d0ce]" />
    </div>
  </aside>
);

export default function App() {
  return (
    <div className="flex h-[1123px] w-[1919px] flex-col overflow-hidden bg-white font-['Open_Sans','Noto_Sans',sans-serif]">
      <div className="h-[73px] shrink-0" />
      <TitleBar />
      <Ribbon />
      <div className="flex min-h-0 flex-1">
        <Rail />
        <Canvas />
        <aside className="flex w-[48px] shrink-0 flex-col items-center bg-white pt-[20px]">
          <DoubleChevron />
          <svg width="18" height="19" viewBox="0 0 18 19" fill="none" stroke="#323130" strokeWidth="1.600" className="mt-[22px] ml-[6px]">
            <path d="M17 1V18H15.500L8 11H1V7.500H8L15.500 1Z" />
          </svg>
          <span className="mt-[13px] text-[23px] leading-[28px] font-semibold tracking-[-0.015em] text-[#252423] [writing-mode:vertical-rl]">Filters</span>
        </aside>
        <Visualizations />
        <aside className="flex w-[50px] shrink-0 flex-col items-center bg-[#f3f2f1] pt-[20px]">
          <DoubleChevron />
          <span className="mt-[21px] text-[23px] leading-[28px] font-semibold text-[#252423] [writing-mode:vertical-rl]">Data</span>
        </aside>
      </div>
    </div>
  );
}
